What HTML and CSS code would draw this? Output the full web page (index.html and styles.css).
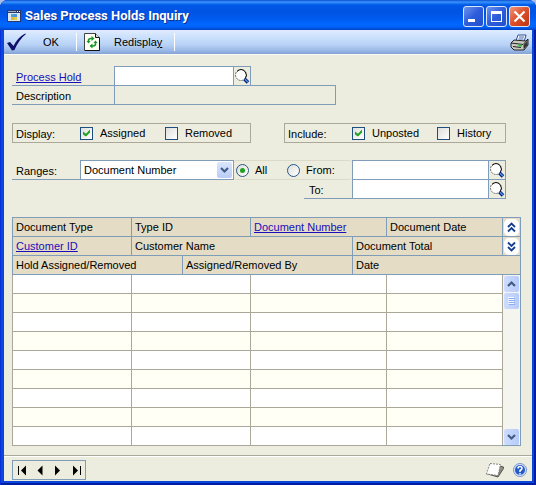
FILE: index.html
```html
<!DOCTYPE html>
<html lang="en">
<head>
<meta charset="utf-8">
<title>Sales Process Holds Inquiry</title>
<link rel="stylesheet" href="styles.css">
</head>
<body>
<svg class="defs" aria-hidden="true">
  <symbol id="lens" viewBox="0 0 16 16">
    <circle cx="7" cy="7" r="5.5" fill="#fff" stroke="#666" stroke-width="1" stroke-dasharray="2 1"/>
    <path d="M3 3.500Q7-.5 11 3.500Q14 7 11 11" fill="none" stroke="#111"/>
    <path d="M10.500 11 14 14.500" stroke="#001a70" stroke-width="3.600"/>
    <path d="M11 11.200 14 14.200" stroke="#4b94e8" stroke-width="1.600"/>
  </symbol>
</svg>
<div class="window">
  <header class="titlebar">
    <svg class="app-icon" width="14" height="12" viewBox="0 0 14 12" aria-hidden="true">
      <path d="M0 0H14V12H0Z" fill="#2b3b68"/><path d="M1 3H13V11H1Z" fill="#dce6ee"/><path d="M1 1H9V2H1Z" fill="#98acd0"/><path d="M10 1H11V2H10ZM12 1H13V2H12Z" fill="#fff"/>
      <path d="M4 4H7V7H4Z" fill="#4ba9bd"/><path d="M7 4H10V7H7Z" fill="#548ee0"/><path d="M4 7H7V10H4Z" fill="#e8b441"/><path d="M7 7H10V10H7Z" fill="#d9cc54"/>
    </svg>
    <h1>Sales Process Holds Inquiry</h1>
    <div class="captions">
      <button class="cap" aria-label="Minimize"><svg width="19" height="19" viewBox="0 0 19 19"><path d="M4 12H11V15H4Z" fill="#fff"/></svg></button>
      <button class="cap" aria-label="Maximize"><svg width="19" height="19" viewBox="0 0 19 19"><path d="M4 4H15V15H4ZM5 7V14H14V7Z" fill="#fff" fill-rule="evenodd"/></svg></button>
      <button class="cap close" aria-label="Close"><svg width="19" height="19" viewBox="0 0 19 19"><path d="M4.500 4.500 14.500 14.500M14.500 4.500 4.500 14.500" stroke="#fff" stroke-width="2.200"/></svg></button>
    </div>
  </header>
  <div class="client">
    <div class="toolbar">
      <button class="tool ok"><svg width="20" height="19" viewBox="0 0 20 19" aria-hidden="true"><path d="M0 10 3 9 6.500 13C9 8 13 3 18.500.5L19 1C14 5 10 11 7.500 17L5 17.500Z" fill="#10106c"/></svg><span>OK</span></button>
      <button class="tool redisplay"><svg width="16" height="18" viewBox="0 0 16 18" aria-hidden="true"><path d="M.5.5H11.500L15.500 4.500V17.500H.5Z" fill="#fffff4" stroke="#444"/><path d="M11.500.5V4.500H15.500" fill="#ddd" stroke="#111"/><path d="M15.500 5V17.500H1" fill="none" stroke="#111"/><path d="M4.500 9V7.500Q4.500 5.500 7 5.500H8M11.500 9V11Q11.500 13 9 13H8" fill="none" stroke="#17952b" stroke-width="1.600"/><path d="M7.500 3V8L10.500 5.500ZM8.500 10.500V15.500L5.500 13ZM2.500 8H6.500L4.500 10.500ZM9.500 10H13.500L11.500 7.500Z" fill="#17952b"/></svg><span>Redispla<u>y</u></span></button>
      <button class="tool print" aria-label="Print"><svg width="19" height="17" viewBox="0 0 19 17"><path d="M6 7 8 1H16L14 8Z" fill="#fff" stroke="#2d4d9a"/><path d="M9 3H14M8.500 5H13.500" stroke="#3e64b4"/><path d="M1 9 4 6 16 7 18 5V11L14 16H4L1 13Z" fill="#c9c9c1" stroke="#222"/><path d="M1 9 13 10.500 17.500 6" fill="none" stroke="#222"/><path d="M13.500 11V15.500L17.500 11V7Z" fill="#333"/><path d="M3 12.500 11 13.500" stroke="#222"/><path d="M8.500 11.500H12" stroke="#21c535" stroke-width="2"/></svg></button>
    </div>
    <main class="content">
      <section class="form">
        <div class="row">
          <label class="caption wide" for="hold"><a href="#hold">Process Hold</a></label>
          <input class="field short" id="hold" type="text">
          <button class="lookup" aria-label="Look up process hold"><svg width="16" height="16"><use href="#lens"/></svg></button>
        </div>
        <div class="row">
          <label class="caption wide" for="desc">Description</label>
          <input class="field desc" id="desc" type="text" readonly>
        </div>
      </section>
      <section class="options">
        <div class="group display" role="group" aria-label="Display">
          <span class="group-name">Display:</span>
          <label class="tick"><input type="checkbox" checked>Assigned</label>
          <label class="tick"><input type="checkbox">Removed</label>
        </div>
        <div class="group include" role="group" aria-label="Include">
          <span class="group-name">Include:</span>
          <label class="tick"><input type="checkbox" checked>Unposted</label>
          <label class="tick"><input type="checkbox">History</label>
        </div>
      </section>
      <section class="ranges">
        <div class="row">
          <label class="caption range-name" for="range">Ranges:</label>
          <div class="combo">
            <select id="range"><option>Document Number</option></select>
            <svg class="drop" width="15" height="16" viewBox="0 0 15 16" aria-hidden="true"><path d="M4 6 7.500 9.500 11 6" fill="none" stroke="#435c85" stroke-width="2.200"/></svg>
          </div>
          <div class="radios">
            <label><input type="radio" name="scope" checked>All</label>
            <label><input type="radio" name="scope">From:</label>
          </div>
          <input class="field grow" type="text" aria-label="From">
          <button class="lookup" aria-label="Look up from"><svg width="16" height="16"><use href="#lens"/></svg></button>
        </div>
        <div class="row to-row">
          <label class="caption to-name" for="to">To:</label>
          <input class="field grow" id="to" type="text">
          <button class="lookup" aria-label="Look up to"><svg width="16" height="16"><use href="#lens"/></svg></button>
        </div>
      </section>
      <table class="list">
        <colgroup><col class="c1"><col class="c2"><col class="c3"><col class="c4"><col class="c5"><col><col class="c7"></colgroup>
        <thead>
          <tr><th>Document Type</th><th colspan="2">Type ID</th><th colspan="2"><a href="#document">Document Number</a></th><th>Document Date</th><th class="tog"><button aria-label="Hide details"><svg width="15" height="17" viewBox="0 0 15 17"><rect width="15" height="17" rx="5" fill="#fff"/><path d="M4 8 7.500 4.500 11 8M4 12.500 7.500 9 11 12.500" fill="none" stroke="#153c92" stroke-width="1.800"/></svg></button></th></tr>
          <tr><th><a href="#customer">Customer ID</a></th><th colspan="3">Customer Name</th><th colspan="2">Document Total</th><th class="tog"><button aria-label="Show details"><svg width="15" height="17" viewBox="0 0 15 17"><rect width="15" height="17" rx="5" fill="#fff"/><path d="M4 4.500 7.500 8 11 4.500M4 9 7.500 12.500 11 9" fill="none" stroke="#153c92" stroke-width="1.800"/></svg></button></th></tr>
          <tr><th colspan="2">Hold Assigned/Removed</th><th colspan="2">Assigned/Removed By</th><th colspan="3">Date</th></tr>
        </thead>
        <tbody>
          <tr><td></td><td colspan="2"></td><td colspan="2"></td><td></td>
            <td class="scroll" rowspan="9"><div class="bar">
              <button aria-label="Scroll up"><svg width="15" height="16" viewBox="0 0 15 16"><path d="M4 10 7.500 6.500 11 10" fill="none" stroke="#435c85" stroke-width="2.200"/></svg></button>
              <div class="thumb"><svg width="15" height="16" viewBox="0 0 15 16"><path d="M4 4.500H10M4 6.500H10M4 8.500H10M4 10.500H10" stroke="#f2f6ff"/><path d="M5 5.500H11M5 7.500H11M5 9.500H11M5 11.500H11" stroke="#8caef0"/></svg></div>
              <button class="down" aria-label="Scroll down"><svg width="15" height="16" viewBox="0 0 15 16"><path d="M4 6 7.500 9.500 11 6" fill="none" stroke="#435c85" stroke-width="2.200"/></svg></button>
            </div></td></tr>
          <tr><td></td><td colspan="2"></td><td colspan="2"></td><td></td></tr>
          <tr><td></td><td colspan="2"></td><td colspan="2"></td><td></td></tr>
          <tr><td></td><td colspan="2"></td><td colspan="2"></td><td></td></tr>
          <tr><td></td><td colspan="2"></td><td colspan="2"></td><td></td></tr>
          <tr><td></td><td colspan="2"></td><td colspan="2"></td><td></td></tr>
          <tr><td></td><td colspan="2"></td><td colspan="2"></td><td></td></tr>
          <tr><td></td><td colspan="2"></td><td colspan="2"></td><td></td></tr>
          <tr><td></td><td colspan="2"></td><td colspan="2"></td><td></td></tr>
        </tbody>
      </table>
    </main>
    <footer class="status">
      <nav class="records" aria-label="Records">
        <button aria-label="First"><svg width="18" height="18" viewBox="0 0 18 18"><path d="M5 5H6V14H5ZM13 4.500V14.500L8 9.500Z"/></svg></button>
        <button aria-label="Previous"><svg width="18" height="18" viewBox="0 0 18 18"><path d="M11.500 4.500V14.500L6.500 9.500Z"/></svg></button>
        <button aria-label="Next"><svg width="18" height="18" viewBox="0 0 18 18"><path d="M6 4.500V14.500L11 9.500Z"/></svg></button>
        <button aria-label="Last"><svg width="18" height="18" viewBox="0 0 18 18"><path d="M6 4.500V14.500L11 9.500ZM13 5H14V14H13Z"/></svg></button>
      </nav>
      <button class="plain" aria-label="Notes"><svg width="20" height="16" viewBox="0 0 20 16"><path d="M1 11.500 13 15 18.500 6.500V5L15 4 13 13Z" fill="#8d8d80" stroke="#55554c"/><path d="M5 1.500 15.500 2.500 13 13.500 1.500 12Z" fill="#fff" stroke="#888" stroke-dasharray="2 1"/></svg></button>
      <button class="plain help" aria-label="Help"><svg width="14" height="14" viewBox="0 0 14 14"><circle cx="7" cy="7" r="6.500" fill="#d7e3f8" stroke="#7795d3"/><circle cx="7" cy="7" r="5" fill="#245ac6"/><path d="M5 5.500Q5 3.500 7 3.500T9 5.500Q9 6.500 7 7.500V9M7 10V11.500" fill="none" stroke="#fff" stroke-width="1.500"/></svg></button>
    </footer>
  </div>
</div>
</body>
</html>
```
FILE: styles.css
```css
* { box-sizing: border-box; }
body { margin: 0; background: #a9bdea; color: #000; font: 11px/18px "Liberation Sans", Arial, sans-serif; }
button, input, select { margin: 0; padding: 0; border: 0; border-radius: 0; background: none; color: inherit; font: inherit; }
svg { display: block; flex: none; }
a { color: #1a0dbc; }
.defs { position: absolute; width: 0; height: 0; }

.window {
  display: flex; flex-direction: column; min-height: 100vh; padding: 0 4px 4px;
  border-radius: 8px 8px 0 0;
  background: #0a45dc; box-shadow: inset 1px 0 #0831d9, inset -2px -2px #001ea0;
}
.titlebar {
  display: flex; align-items: center; height: 30px; margin: 0 -4px; padding: 2px 6px 0 7px;
  border-radius: 8px 8px 0 0;
  background: linear-gradient(#0a4fd0 0, #3a94ff 2px, #2380f5 3px, #0058e6 5px, #0054e3 12px, #0059ee 18px, #0068ff 24px, #0062f8 27px, #0041c4 30px);
}
h1 { flex: 1; margin: 0 0 0 4px; color: #fff; font: bold 13px/18px Roboto, sans-serif; text-shadow: 1px 1px #0a2f8c; }
.captions { display: flex; gap: 2px; }
.cap { width: 21px; height: 21px; border: 1px solid #dbe6fb; border-radius: 3px; background: linear-gradient(135deg, #6d93ee, #2d5cdb 50%, #2350cc); }
.close { background: linear-gradient(135deg, #ee957a, #dc4f28 50%, #bd3510); }

.client { display: flex; flex: 1; flex-direction: column; background: #ecedde; }
.toolbar { display: flex; align-items: center; height: 25px; border-bottom: 1px solid #fbfbf5; background: linear-gradient(#e0ecff, #c9dffc 8px, #b7d1f6 15px, #98b6e5 21px, #84a3d2 24px); }
.tool { display: flex; align-items: center; height: 18px; }
.ok { width: 73px; padding-left: 3px; gap: 16px; border-right: 1px solid #fff; }
.redisplay { width: 98px; padding-left: 7px; gap: 14px; border-right: 1px solid #fff; }
.print { margin-left: auto; padding-right: 3px; }

.content { padding: 11px 11px 9px 8px; }
.form, .options, .ranges { margin-right: 15px; }
.row { display: flex; height: 20px; }
.row + .row { margin-top: -1px; }
.caption { flex: none; padding: 2px 0 0 4px; border-bottom: 1px solid #7f9db9; line-height: 18px; }
.wide { width: 102px; }
.field { min-width: 0; padding: 0 4px; border: 1px solid #7f9db9; background: #fff; }
.field[readonly] { background: transparent; }
.short { width: 120px; }
.desc { width: 222px; }
.grow { flex: 1; }
.lookup { flex: none; width: 18px; margin-left: -1px; border: 1px solid #7f9db9; }

.options { display: flex; justify-content: space-between; margin-top: 18px; }
.group { display: flex; height: 20px; border: 1px solid #aca899; }
.display { width: 239px; }
.include { width: 222px; }
.group-name { flex: none; width: 67px; padding: 1px 0 0 3px; }
.tick { display: flex; flex: none; align-items: center; width: 85px; gap: 7px; }
.tick:last-child { width: auto; }
.tick input { flex: none; width: 13px; height: 13px; appearance: none; border: 1px solid #1d4f80; background: linear-gradient(135deg, #dedfdb, #fff); }
.tick input:checked::before { content: ""; display: block; width: 7px; height: 7px; margin: 2px; background: #21a121; clip-path: polygon(0 29%, 43% 62%, 100% 0, 100% 43%, 43% 100%, 0 71%); }

.ranges { margin-top: 17px; }
.range-name { width: 68px; }
.combo { position: relative; flex: none; width: 154px; }
.combo select { width: 100%; height: 20px; padding: 0 18px 0 3px; appearance: none; border: 1px solid #7f9db9; background: #fff; }
.drop { position: absolute; top: 2px; right: 2px; border-radius: 2px; background: linear-gradient(#dbe6fe, #b9ccf7); pointer-events: none; }
.radios { display: flex; width: 118px; padding-left: 2px; border: 1px solid #dadac8; border-width: 1px 0; border-radius: 3px; }
.radios label { display: flex; align-items: center; width: 51px; gap: 6px; }
.radios input { display: grid; flex: none; width: 13px; height: 13px; place-content: center; appearance: none; border: 1px solid #285885; border-radius: 50%; background: linear-gradient(135deg, #dedfdb, #fff); }
.radios input:checked::before { content: ""; width: 5px; height: 5px; border-radius: 50%; background: #21a121; }
.to-row { margin-left: 292px; }
.to-name { width: 48px; padding-left: 5px; }

.list { width: 100%; margin-top: 18px; border: 1px solid #7f9db9; border-collapse: collapse; table-layout: fixed; background: #fff; }
.c1 { width: 119px; }
.c2 { width: 51px; }
.c3 { width: 68px; }
.c4 { width: 102px; }
.c5 { width: 34px; }
.c7 { width: 18px; }
.list th { height: 19px; padding: 1px 0 0 3px; border: 1px solid #7f9db9; background: #e5dcc5; font-weight: normal; line-height: 17px; text-align: left; white-space: nowrap; }
.list .tog { padding: 0; }
.tog button { display: block; margin: 0 auto; }
.list td { height: 19px; padding: 0; border: 1px solid #aca899; }
.list tr:nth-child(even) td { background: #fffff5; }
.list .scroll { height: 1px; border-color: #7f9db9; border-left: 0; background: #f5f5f0; }
.bar { display: flex; flex-direction: column; height: 170px; align-items: center; gap: 1px; padding-top: 1px; }
.bar button, .thumb { border-radius: 2px; background: linear-gradient(90deg, #cddcff, #b7cbf9); }
.bar .down { margin-top: auto; }

.status { display: flex; align-items: center; padding: 4px 5px 1px 8px; border-top: 1px solid #aca899; box-shadow: inset 0 1px #fff; }
.records { display: flex; width: 74px; height: 20px; margin-right: auto; border: 1px solid #7f9db9; }
.plain { display: block; }
.help { margin-left: 8px; }
```
